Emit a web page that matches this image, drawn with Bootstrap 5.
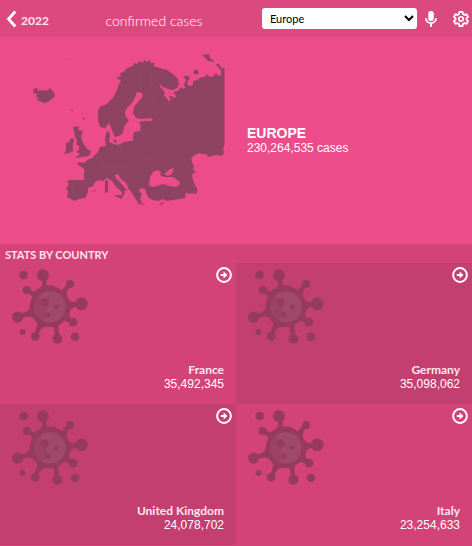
<!DOCTYPE html>
<html lang="en">
<head>
<meta charset="utf-8">
<meta name="viewport" content="width=device-width, initial-scale=1">
<title>Confirmed cases - Europe</title>
<link href="https://cdn.jsdelivr.net/npm/bootstrap@5.3.0/dist/css/bootstrap.min.css" rel="stylesheet">
<style>
body{background:#d34378;color:#fff;font:12px/14px "Liberation Sans",Arial,sans-serif}
.topbar{background:#dc497f;height:37px;font-family:Lato,sans-serif}
.back{width:88px;padding-left:6px;font-size:12px;font-weight:700;color:#ffe6f0}
.heading{font-size:14px;font-weight:300;line-height:20px;margin-right:42px}
.region{width:155px;height:21px;font:11px Lato,sans-serif;border:0;border-radius:3px;background:#fff;color:#000;padding:0 4px}
.tool{line-height:0;color:#fff}
.tool.settings{margin-right:3px}
.hero{background:#ec4c8a;height:207px}
.map{width:210px;height:180px;margin:8px 0 0 20px}
.map path,.map circle{fill:#8e4361}
.map .sea{fill:#ec4c8a}
.map .borders{fill:none;stroke:#994968;stroke-width:.5}
.total{padding-left:17px}
.total h1{font-size:14px;line-height:15px;font-weight:700}
.stats-title{font:700 11px/19px Lato,sans-serif;color:#ffe6f0;padding:1px 0 0 5px;height:19px}
.tile{height:141px;background:#d34378}
.tile.deep{background:#c23f70}
.virus{width:78px;height:77px;margin:5px 0 0 11px}
.go{line-height:0;margin:4px 4px 0 0}
.country{font:700 12px/14px Lato,sans-serif;color:#ffe6f0}
.figures{padding:0 12px 13px 0}
</style>
</head>
<body>
<svg class="d-none" aria-hidden="true">
<symbol id="virus" viewBox="30 85 235 232">
<g fill="#963b5e" stroke="#963b5e"><g stroke-width="13" fill="none"><path d="M128 108L133 155M208 133L180 165M242 193L200 198M217 248L180 230M170 296L163 250M104 291L120 245M50 232L105 218M77 151L115 175"/></g>
<g stroke="none"><path d="M120 138Q131 147 139 137Q165 136 182 153Q193 161 202 150Q193 168 203 180Q211 190 226 188V202Q208 205 206 220Q204 232 214 240L207 252Q194 237 180 248Q170 253 174 280H164Q160 258 146 263Q127 258 116 275L105 280Q119 258 104 245Q91 221 59 238L53 226Q88 216 86 203Q88 183 94 174Q96 163 78 158L85 147Q96 162 108 150Q122 145 120 138Z"/>
<circle cx="148" cy="202" r="60"/><circle cx="68" cy="106" r="13"/><circle cx="126" cy="107" r="18"/><circle cx="208" cy="133" r="12"/><circle cx="242" cy="193" r="19"/><circle cx="217" cy="248" r="13"/><circle cx="223" cy="292" r="13"/><circle cx="170" cy="298" r="15"/><circle cx="103" cy="291" r="13"/><circle cx="65" cy="278" r="9"/><circle cx="50" cy="233" r="17"/><circle cx="77" cy="151" r="12"/></g></g>
<circle cx="147" cy="202" r="48" fill="#9c4364"/><path d="M148 155a47 47 0 1 1-20 90a58 58 0 0 0-13-76a47 47 0 0 1 33-14" fill="#a14968"/>
<g fill="#963b5e"><circle cx="132" cy="189" r="12"/><circle cx="167" cy="202" r="7"/><circle cx="141" cy="226" r="8"/></g>
</symbol>
<symbol id="go" viewBox="0 0 16 16"><circle cx="8" cy="8" r="6.9" fill="none" stroke="#fff" stroke-width="2"/><path d="M4.800 6.900h2.800V4.600L11.500 8l-3.900 3.400V9.100H4.800z" fill="#fff"/></symbol>
</svg>

<header class="topbar d-flex align-items-center">
  <a href="#" class="back d-flex align-items-center text-decoration-none">
    <svg width="11" height="18" viewBox="0 0 11 18" aria-hidden="true"><path d="M9.300 1.500L2.500 9l6.800 7.500" fill="none" stroke="#fff" stroke-width="2.800"/></svg><span class="pt-1 ps-1">2022</span>
  </a>
  <div class="heading flex-grow-1 text-center pt-1">confirmed cases</div>
  <select class="region" aria-label="Region"><option>Europe</option><option>Asia</option><option>Africa</option></select>
  <button class="tool btn p-0 border-0 ms-2" aria-label="Voice search">
    <svg width="12" height="16" viewBox="0 0 12 16"><rect x="3.200" y="0" width="5.600" height="10" rx="2.800" fill="#fff"/><path d="M1 7.200a5 5 0 0 0 10 0M6 12.200V16" fill="none" stroke="#fff" stroke-width="1.800"/></svg>
  </button>
  <button class="tool settings btn p-0 border-0 ms-3" aria-label="Settings">
    <svg width="16" height="16" viewBox="0 0 16 16"><path d="M6.400 1h3.200l.4 2 1.500.9 2-.8 1.600 2.800L13.500 7.200v1.600l1.600 1.300-1.600 2.800-2-.8-1.500.9-.4 2H6.400l-.4-2-1.500-.9-2 .8L.9 10.100l1.600-1.300V7.200L.9 5.900l1.600-2.800 2 .8L6 3z" fill="none" stroke="#fff" stroke-width="1.800" stroke-linejoin="round"/><circle cx="8" cy="8" r="2.200" fill="none" stroke="#fff" stroke-width="1.600"/></svg>
  </button>
</header>

<main>
<section class="hero d-flex">
  <svg class="map flex-shrink-0" viewBox="20 45 210 180" role="img" aria-label="Map of Europe">
    <path d="M98 110L101 106 105 105 108 103 110 100 113 98 115 94 117 90 119 84 121 80 118 79 116 78 121 76 120 73 124 72 126 69 130 67 133 66 134 63 137 64 140 61 142 63 145 60 147 62 150 60 151 63 155 63 153 66 160 68 167 70 173 74 178 79 179 84 177 88 173 90 168 89 163 87 159 84 161 88 165 92 164 96 167 98 168 101 171 100 169 96 172 96 174 98 176 97 175 94 173 92 178 91 181 87 183 89 185 88 184 84 186 80 183 76 188 76 190 78 188 81 187 84 190 86 193 85 193 81 197 80 202 77 205 77 207 74 210 77 214 76 216 73 219 76 221 75 221 70 216 65 218 63 222 68 224.500 68V145L223 149 224 153 222 156 216 155 212 156 208 157 206 154 202 154 199 153 195 155 191 158 192 162 194 166 193 170 196 171 192 175 193 180 195 185 198 190 196 194 192 193 188 194 186 192 185 198 180 199 172 200 167 201 163 199 158 201 153 200 149 198 147 195 145 189 141 188 139 191 142 194 140 199 142 202 139 204 135 198 132 193 128 188 127 184 120 178 118 174 115 175 116 178 120 182 124 187 128 191 124 190 125 194 122 196 122 192 116 187 112 181 107 178 103 181 98 180 95 182 93 186 88 188 88 192 85 198 79 199 74 201 71 199 67 197 68 191 66 189 69 184 67 182 69 180 84 180 84 169 80 166 77 164 79 162 83 163 86 162 87 160 92 158 98 152 100 147 106 146 105 140 106 133 109 131 110 136 109 142 114 144 118 145 124 142 130 141 133 141 133 137 134 132 140 131 141 126 139 122 145 121 151 121 153 119 150 118 142 119 136 118 133 113 134 107 138 102 143 96 142 93 137 92 134 100 131 104 127 108 125 112 126 117 129 120 124 127 123 133 119 136 115 137 112 130 109 123 105 128 100 127 98 121Z"/>
    <path d="M32 93l2-1-1-3 4-1 1 3 2-1 1 1 3-1 2 1 3-2 2-1 1 3 2 1 1 4-3 3-4 3-4 1-4-2-4-1 3-2-4-2 3-2zM73 127l6-1-1 4 5 1-2 6 2 6 4 6 4 2-2 5-14 2 5-4-4-2 3-2 0-4-3-2 1-3-2-5zM66 143l3-1 1-3 3-1 1 3-1 3 0 7-4 2-5 1 2-4zM202 55l7-1 1 4 5 4-7-1zM115 195l8 0-1 4-7-3zM105 181l3-1v12l-3 1zM106 174l2-2v6zM137 203l9 1-4 1zM159 204l5-2-2 3zM71 109l2 1-1 2zM83 117l2 2-2 1zM66 60l3-2-2 2zM114 139l3 2-1 2-3-2zM92 191l4-1-2 2zM86 194l2-1zM22 194l4 1zM46 219l2 1zM49 221l3 1zM55 220l1-1zM49 210l1 1z"/>
    <circle cx="196" cy="72" r="2.500"/>
    <path class="sea" d="M149 185L150 177 153 172 157 170 161 172 160 175 164 177 173 177 179 181 180 184 176 187 169 186 163 184 157 186 152 187ZM164 174L170 169 174 168 172 174 168 176ZM126 124l2-1v6l-2 2zM129 113l2 0 1 6-2 3z"/>
    <path class="borders" d="M140 72l1 18M151 68l1 25 4 13-6 10M140 132l9 1 6 6 9 8 4 8 7 3M120 145l2 9 7 5M100 168l8-2 6 2 9-3 10 5 5 12M96 157l9 9M142 157l8 3 5 8M73 183l-1 14M87 180l6 3"/>
  </svg>
  <div class="total align-self-center"><h1 class="mb-0">EUROPE</h1><div>230,264,535 cases</div></div>
</section>

<h2 class="stats-title mb-0">STATS BY COUNTRY</h2>
<section class="row row-cols-2 g-0">
  <article class="col tile d-flex flex-column justify-content-between"><div class="d-flex justify-content-between align-items-start"><svg class="virus" aria-hidden="true"><use href="#virus"/></svg><a class="go" href="#" aria-label="France details"><svg width="16" height="16"><use href="#go"/></svg></a></div><div class="figures text-end"><div class="country">France</div><div>35,492,345</div></div></article>
  <article class="col tile deep d-flex flex-column justify-content-between"><div class="d-flex justify-content-between align-items-start"><svg class="virus" aria-hidden="true"><use href="#virus"/></svg><a class="go" href="#" aria-label="Germany details"><svg width="16" height="16"><use href="#go"/></svg></a></div><div class="figures text-end"><div class="country">Germany</div><div>35,098,062</div></div></article>
  <article class="col tile deep d-flex flex-column justify-content-between"><div class="d-flex justify-content-between align-items-start"><svg class="virus" aria-hidden="true"><use href="#virus"/></svg><a class="go" href="#" aria-label="United Kingdom details"><svg width="16" height="16"><use href="#go"/></svg></a></div><div class="figures text-end"><div class="country">United Kingdom</div><div>24,078,702</div></div></article>
  <article class="col tile d-flex flex-column justify-content-between"><div class="d-flex justify-content-between align-items-start"><svg class="virus" aria-hidden="true"><use href="#virus"/></svg><a class="go" href="#" aria-label="Italy details"><svg width="16" height="16"><use href="#go"/></svg></a></div><div class="figures text-end"><div class="country">Italy</div><div>23,254,633</div></div></article>
</section>
</main>
<script src="https://cdn.jsdelivr.net/npm/bootstrap@5.3.0/dist/js/bootstrap.bundle.min.js"></script>
</body>
</html>
